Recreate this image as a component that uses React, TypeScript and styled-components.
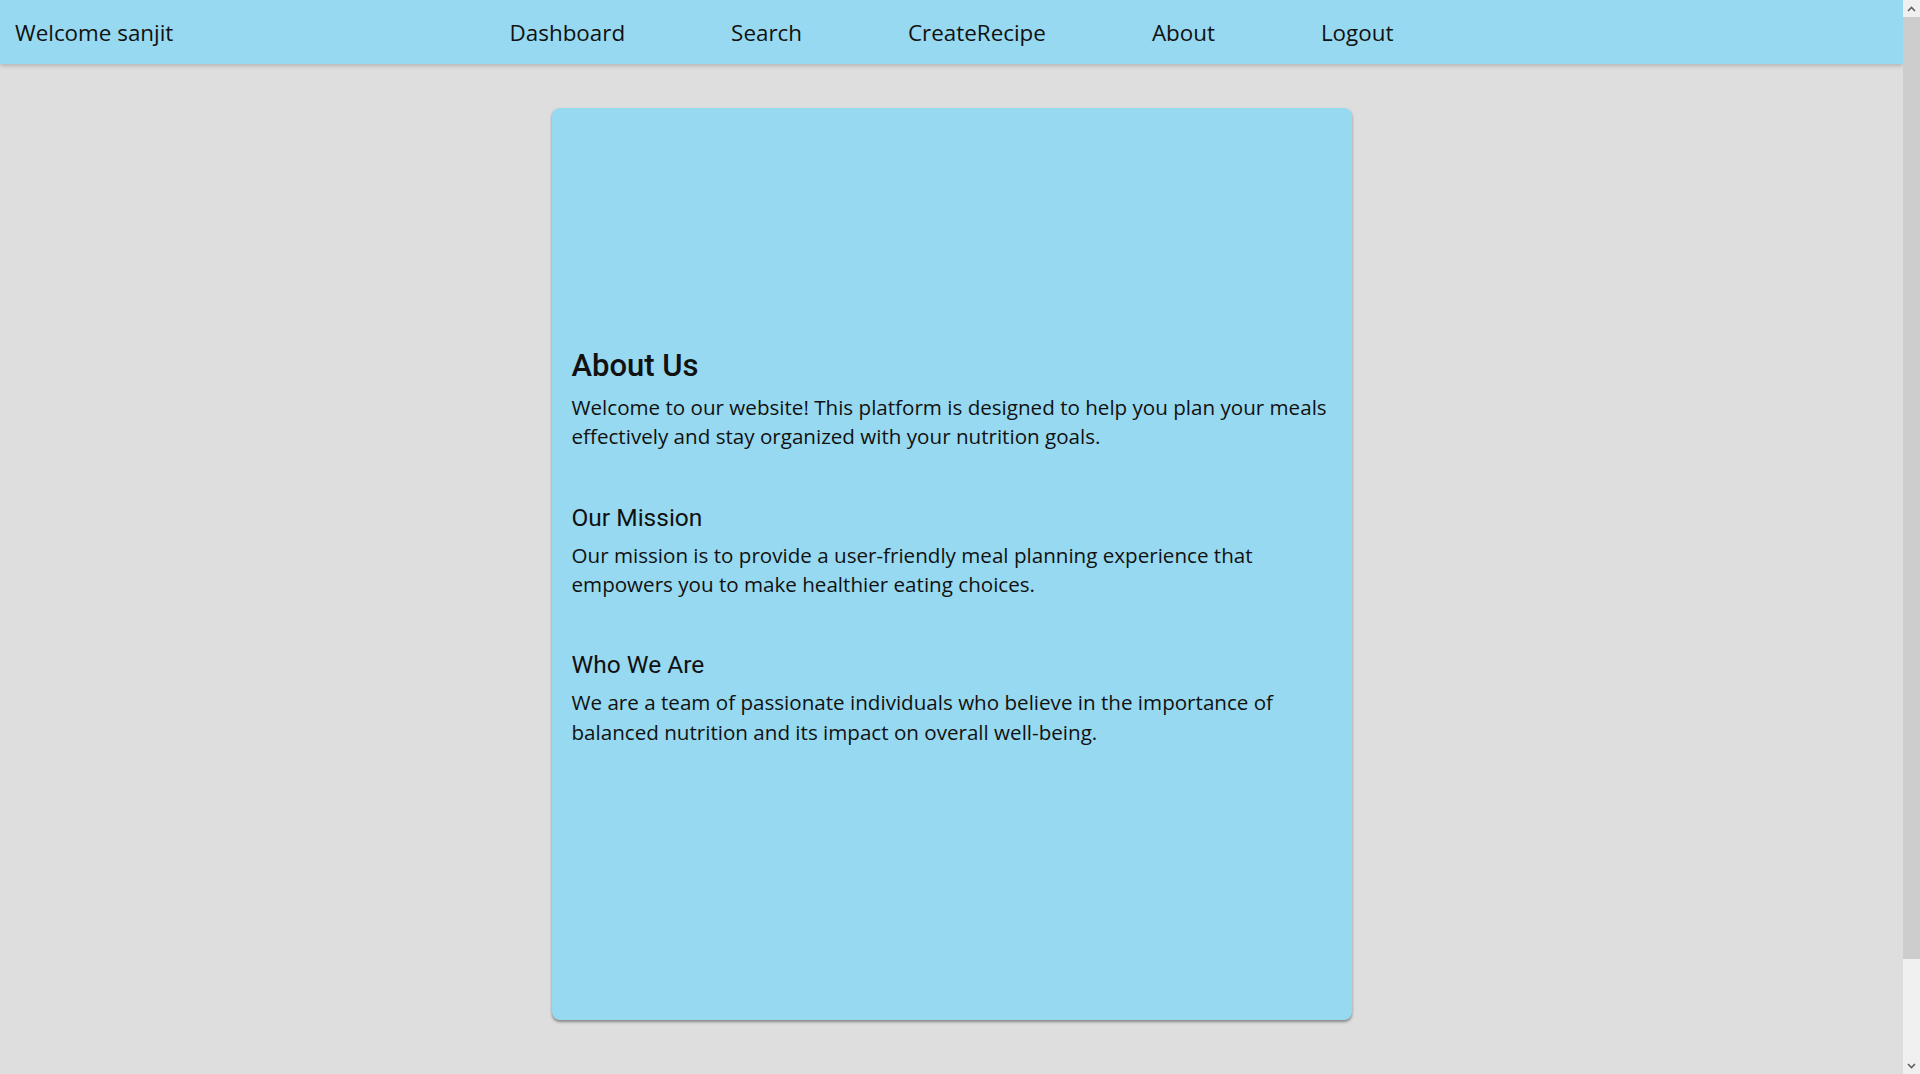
import React from "react";
import styled, { createGlobalStyle } from "styled-components";

const GlobalStyle = createGlobalStyle`
  html, body {
    margin: 0;
    padding: 0;
    background: #dedede;
    font-family: "Open Sans", "Liberation Sans", sans-serif;
    color: #111;
  }
  body {
    padding-right: 17px;
  }
  * { box-sizing: border-box; }
`;

const NavBar = styled.nav`
  display: grid;
  grid-template-columns: 1fr auto 1fr;
  align-items: center;
  height: 64px;
  background: #97d9f0;
  box-shadow: 0 2px 4px rgba(0, 0, 0, 0.18);
  padding: 0 15px;
`;

const Brand = styled.div`
  font-size: 22.4px;
  color: #111;
`;

const NavLinks = styled.ul`
  display: flex;
  align-items: center;
  gap: 106px;
  list-style: none;
  margin: 0;
  padding: 0;
`;

const NavLink = styled.li`
  font-size: 22.4px;
  color: #111;
  cursor: pointer;
`;

const Main = styled.main`
  display: flex;
  justify-content: center;
  padding: 44px 0 166px;
`;

const Card = styled.section`
  width: 800px;
  height: 912px;
  background: #97d9f0;
  border-radius: 8px;
  box-shadow: 0 2px 3px rgba(0, 0, 0, 0.4);
  padding: 20px 20px 53px;
  display: flex;
  flex-direction: column;
  justify-content: center;
`;

const Title = styled.h2`
  font-family: Roboto, "Liberation Sans", sans-serif;
  font-weight: 500;
  font-size: 31px;
  line-height: 36px;
  margin: 0 0 9px;
`;

const SubTitle = styled.h3`
  font-family: Roboto, "Liberation Sans", sans-serif;
  font-weight: 400;
  font-size: 24.5px;
  line-height: 29px;
  margin: 51px 0 9px;
`;

const Paragraph = styled.p`
  font-size: 20.6px;
  line-height: 29.4px;
  margin: 0;
`;

const Block = styled.div`
  display: flex;
  flex-direction: column;
`;

/* Window scrollbar drawn over the page's right edge */
const ScrollBar = styled.div`
  position: fixed;
  top: 0;
  right: 0;
  width: 17px;
  height: 100vh;
  background: #f0f0f0;
  display: flex;
  flex-direction: column;
`;

const ScrollButton = styled.div`
  flex: 0 0 17px;
  display: flex;
  align-items: center;
  justify-content: center;
`;

const ScrollTrack = styled.div`
  flex: 1;
  display: flex;
  flex-direction: column;
`;

const ScrollThumb = styled.div`
  flex: 0 0 90.6%;
  background: #cdcdcd;
`;

const Chevron = ({ down }: { down?: boolean }) => (
  <svg width="9" height="6" viewBox="0 0 9 6">
    <path
      d={down ? "M1 1 L4.5 4.5 L8 1" : "M1 5 L4.5 1.5 L8 5"}
      fill="none"
      stroke="#606060"
      strokeWidth="1.6"
    />
  </svg>
);

export default function App() {
  const links = ["Dashboard", "Search", "CreateRecipe", "About", "Logout"];
  return (
    <>
      <GlobalStyle />
      <NavBar>
        <Brand>Welcome sanjit</Brand>
        <NavLinks>
          {links.map((l) => (
            <NavLink key={l}>{l}</NavLink>
          ))}
        </NavLinks>
        <div />
      </NavBar>
      <Main>
        <Card>
          <Block>
            <Title>About Us</Title>
            <Paragraph>
              Welcome to our website! This platform is designed to help you plan your meals
              effectively and stay organized with your nutrition goals.
            </Paragraph>
          </Block>
          <Block>
            <SubTitle>Our Mission</SubTitle>
            <Paragraph>
              Our mission is to provide a user-friendly meal planning experience that
              empowers you to make healthier eating choices.
            </Paragraph>
          </Block>
          <Block>
            <SubTitle>Who We Are</SubTitle>
            <Paragraph>
              We are a team of passionate individuals who believe in the importance of
              balanced nutrition and its impact on overall well-being.
            </Paragraph>
          </Block>
        </Card>
      </Main>
      <ScrollBar>
        <ScrollButton>
          <Chevron />
        </ScrollButton>
        <ScrollTrack>
          <ScrollThumb />
        </ScrollTrack>
        <ScrollButton>
          <Chevron down />
        </ScrollButton>
      </ScrollBar>
    </>
  );
}
